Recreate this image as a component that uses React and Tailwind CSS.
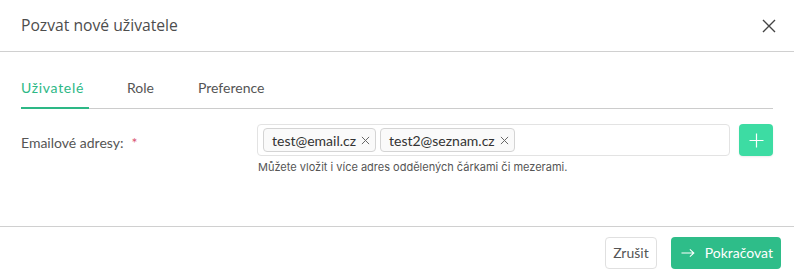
import React from 'react';

const emails = ['test@email.cz', 'test2@seznam.cz'];

function Chip({ text }) {
  return (
    <span className="flex h-[24px] items-center gap-[5px] rounded-[4px] border border-[#d4d4d4] bg-[#fafafa] pl-[8px] pr-[5px] text-[14px] text-[#333]">
      {text}
      <svg width="9" height="9" viewBox="0 0 10 10" className="text-[#666]">
        <path d="M1 1L9 9M9 1L1 9" stroke="currentColor" strokeWidth="1.1" />
      </svg>
    </span>
  );
}

export default function App() {
  return (
    <div className="h-[276px] w-[794px] bg-white font-['Lato',sans-serif] text-[#555]">
      {/* header */}
      <div className="flex h-[52px] items-center justify-between border-b border-[#d0d0d0] pl-[21px] pr-[18px]">
        <h1 className="font-['Open_Sans',sans-serif] text-[15.7px] text-[#4d4d4d]">Pozvat nové uživatele</h1>
        <svg width="14" height="14" viewBox="0 0 14 14" className="text-[#444]">
          <path d="M1 1L13 13M13 1L1 13" stroke="currentColor" strokeWidth="1.4" />
        </svg>
      </div>

      {/* tabs */}
      <div className="mx-[21px] mt-[25px] flex border-b border-[#cccccc] text-[14px]">
        <div className="-mb-px w-[68px] border-b-2 border-[#2db886] pb-[9px] tracking-[0.7px] text-[#2db886]">Uživatelé</div>
        <div className="ml-[38px] pb-[9px] text-[#555]">Role</div>
        <div className="ml-[44px] pb-[9px] text-[#555]">Preference</div>
      </div>

      {/* form row */}
      <div className="mt-[15px] flex pl-[21px] pr-[21px]">
        <div className="w-[236px] pt-[8px] text-[14px] text-[#555]">
          Emailové adresy:<span className="ml-[8px] text-[#d9536f]">*</span>
        </div>
        <div className="flex-1">
          <div className="flex gap-[9px]">
            <div className="flex h-[32px] flex-1 items-center gap-[4px] rounded-[4px] border border-[#e3e3e3] px-[5px]">
              {emails.map((e) => (
                <Chip key={e} text={e} />
              ))}
            </div>
            <button className="flex h-[32px] w-[34px] items-center justify-center rounded-[4px] bg-[#3ddca3] shadow-[0_1px_2px_rgba(0,0,0,0.08)]">
              <svg width="15" height="15" viewBox="0 0 15 15">
                <path d="M7.5 0.5V14.5M0.5 7.5H14.5" stroke="white" strokeWidth="1.2" />
              </svg>
            </button>
          </div>
          <p className="mt-[3px] pl-px font-['Inter',sans-serif] text-[11px] text-[#555]">
            Můžete vložit i více adres oddělených čárkami či mezerami.
          </p>
        </div>
      </div>

      {/* footer */}
      <div className="mt-[50px] flex justify-end gap-[14px] border-t border-[#d0d0d0] pr-[13px] pt-[10px]">
        <button className="h-[32px] rounded-[4px] border border-[#e0e0e0] bg-white px-[7px] text-[14px] text-[#555]">
          Zrušit
        </button>
        <button className="flex h-[32px] items-center gap-[10px] rounded-[4px] bg-[#2ebd89] pl-[10px] pr-[8px] text-[14px] text-white">
          <svg width="14" height="10" viewBox="0 0 15 10">
            <path d="M0.5 5H13.5M9.5 1L13.8 5L9.5 9" stroke="white" strokeWidth="1.1" fill="none" />
          </svg>
          Pokračovat
        </button>
      </div>
    </div>
  );
}
